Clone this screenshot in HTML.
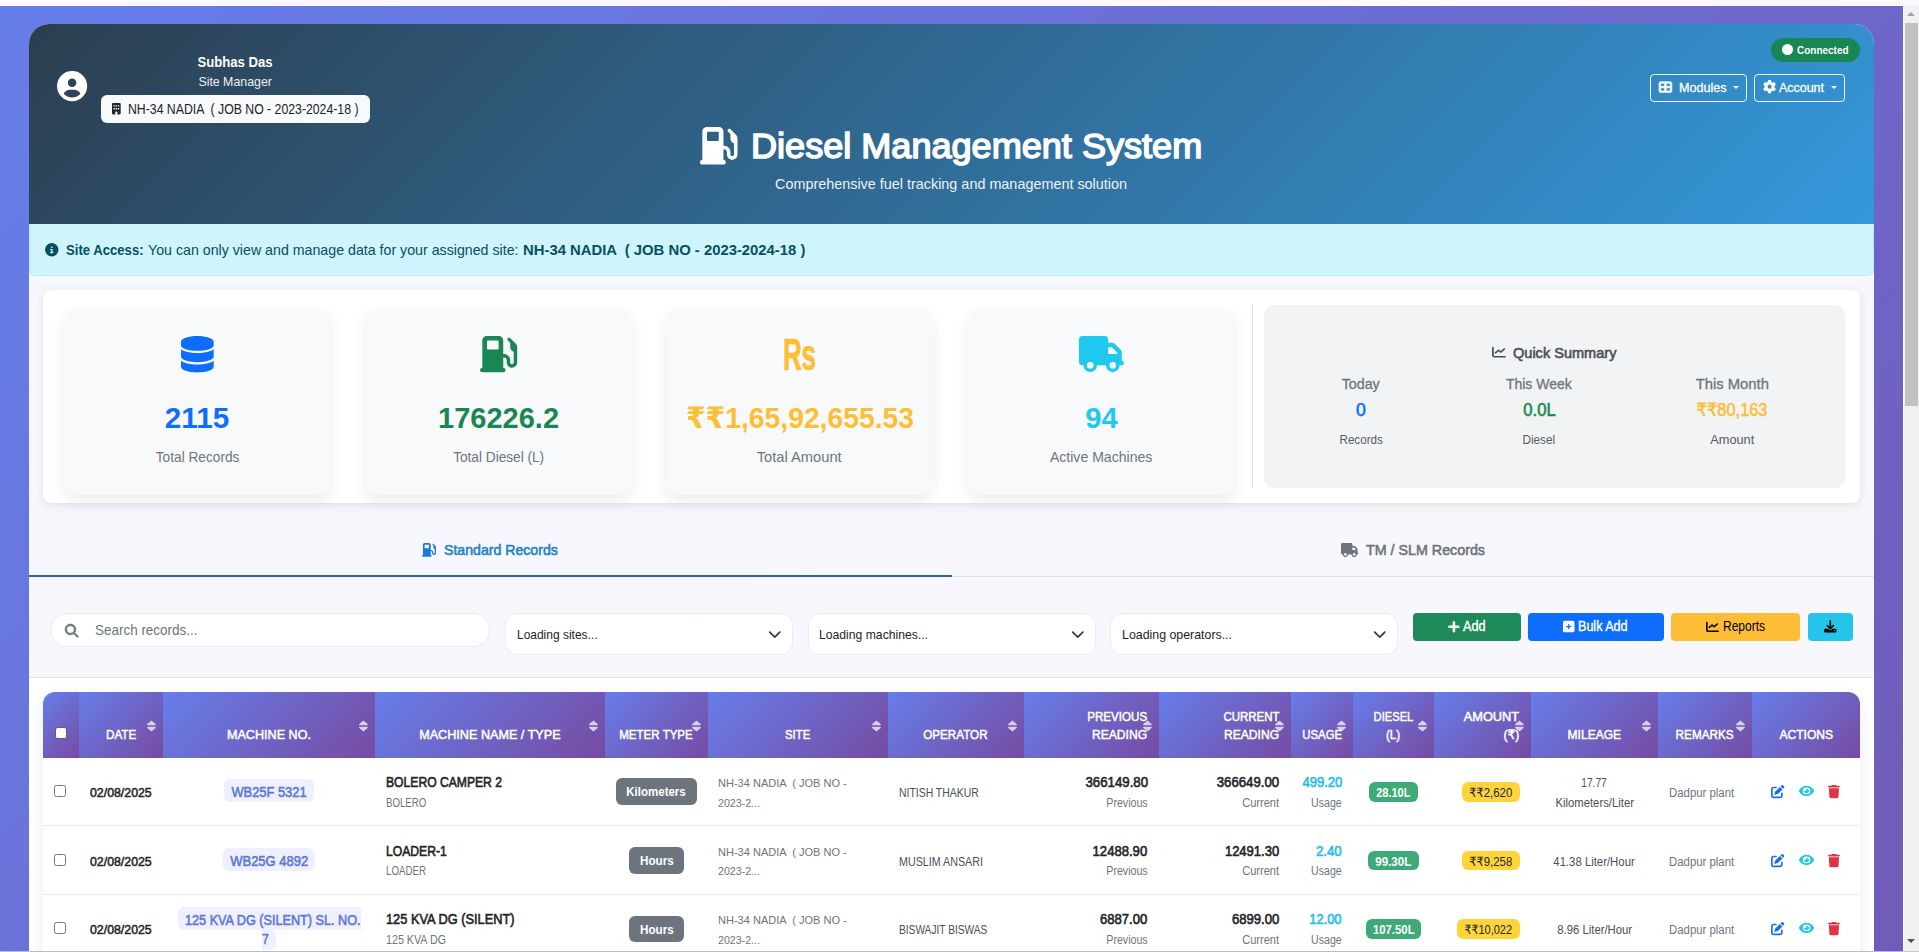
<!DOCTYPE html>
<html lang="en">
<head>
<meta charset="utf-8">
<title>Diesel Management System</title>
<style>
*{box-sizing:border-box;margin:0;padding:0}
html,body{width:1919px;height:952px;overflow:hidden}
body{position:relative;font-family:"Liberation Sans","DejaVu Sans",sans-serif;color:#212529;background:#fdf7ff}
.abs{position:absolute}
.t{position:absolute;white-space:pre;line-height:1;font-weight:400}
svg{display:block;overflow:visible}
.page-bg{position:absolute;left:0;top:6px;width:1903px;height:946px;background:linear-gradient(135deg,#667eea 0%,#764ba2 100%);background-size:1903px 2252px}
.sb{position:absolute;left:1903px;top:6px;width:16px;height:946px;background:#f1f1f1;border-left:1px solid #fafafa}
.sb .thumb{position:absolute;left:1px;top:17px;width:13px;height:383px;background:#c1c1c1}
.sb .up{position:absolute;left:3px;top:6px;width:0;height:0;border-left:4px solid transparent;border-right:4px solid transparent;border-bottom:4px solid #a3a3a3}
.sb .down{position:absolute;left:3px;top:933px;width:0;height:0;border-left:4px solid transparent;border-right:4px solid transparent;border-top:4px solid #505050}
.main{position:absolute;left:29px;top:24px;width:1845px;height:940px;background:rgba(255,255,255,.95);border-radius:20px 20px 0 0;overflow:hidden}
.header{position:absolute;left:0;top:0;width:1845px;height:200px;background:linear-gradient(135deg,#2c3e50 0%,#3498db 100%);color:#fff}
.alert{position:absolute;left:0;top:200px;width:1845px;height:52px;background:#cff4fc;border:1px solid #b6effb;border-top:none;border-radius:0 0 6px 6px;color:#055160}
.stats{position:absolute;left:14px;top:266px;width:1817px;height:213px;background:#fff;border-radius:8px;box-shadow:0 2px 10px rgba(0,0,0,.1)}
.card{position:absolute;top:20.4px;width:265px;height:185px;background:#f8f9fa;border-radius:10px;box-shadow:0 5px 15px rgba(0,0,0,.08)}
.qs{position:absolute;left:1221px;top:15px;width:581px;height:183px;background:#f1f3f5;border-radius:10px}
.vline{position:absolute;left:1209px;top:15px;width:1px;height:183px;background:#dee2e6}
.tabs{position:absolute;left:0;top:500px;width:1845px;height:53px;border-bottom:1px solid #dee2e6}
.tab{position:absolute;top:0;height:53px;width:923px}
.tab.active{border-bottom:2px solid #276c98}
.filters{position:absolute;left:0;top:553px;width:1845px;height:101px;border-bottom:1px solid #e2e5e9}
.search{position:absolute;left:21px;top:36px;width:440px;height:34px;background:#fff;border:1px solid #e9ecef;border-radius:17px}
.sel{position:absolute;top:36px;width:288px;height:42px;background:#fff;border:1px solid #e9ecef;border-radius:12px}
.btn{position:absolute;top:36px;height:28px;border-radius:4px}
.tablewrap{position:absolute;left:0;top:654px;width:1845px;height:300px;background:#fff}
table{position:absolute;left:14px;top:14px;width:1817px;border-collapse:separate;border-spacing:0;table-layout:fixed;background:#fff;border-radius:12px 12px 0 0;overflow:hidden;box-shadow:0 5px 15px rgba(0,0,0,.08)}
th{position:relative;height:65.5px;background:linear-gradient(135deg,#667eea 0%,#764ba2 100%);color:#fff;padding:0}
td{position:relative;height:68.6px;border-bottom:1px solid #e9ecef;padding:0;background:#fff}
.cb{position:absolute;width:12.4px;height:12px;border:1px solid #767676;border-radius:2.5px;background:#fff}
.hcb{position:absolute;width:10.6px;height:10.4px;border-radius:1.5px;background:#fff;box-shadow:0 0 0 .6px rgba(60,60,110,.55)}
.mb{position:absolute;background:#eef1fd;border-radius:6px}
.gb{position:absolute;background:#6c757d;border-radius:6px}
.db{position:absolute;background:#3daa77;border-radius:6px}
.ab{position:absolute;background:#ffd43b;border-radius:6px}
.bottomline{position:absolute;left:0;top:950.6px;width:1919px;height:1.4px;background:linear-gradient(90deg,#b3bcf7 0,#b3bcf7 29px,#bcbcbc 29px,#bcbcbc 1874px,#b9b0e8 1874px,#b9b0e8 1903px,#c8c8c8 1903px)}
</style>
</head>
<body>
<div class="page-bg"></div>
<div class="sb"><div class="up"></div><div class="thumb"></div><div class="down"></div></div>
<div class="main">
<div class="header">
<svg class="abs" style="left:28.00px;top:47.00px;" width="30.20" height="30.20" viewBox="0 0 512 512" fill="#fff" preserveAspectRatio="none"><path fill-rule="evenodd" d="M399 384.2C376.900 345.800 335.400 320 288 320H224c-47.400 0-88.900 25.800-111 64.200c35.200 39.200 86.200 63.800 143 63.800s107.800-24.700 143-63.800zM0 256a256 256 0 1 1 512 0A256 256 0 1 1 0 256zm256 16a72 72 0 1 0 0-144 72 72 0 1 0 0 144z"/></svg>
<span class="t" style="left:166.43px;top:31.00px;font-size:14.00px;font-weight:700;color:#fff;transform:scaleX(0.9359);transform-origin:50% 0;">Subhas Das</span>
<span class="t" style="left:166.05px;top:51.00px;font-size:13.50px;color:#fff;transform:scaleX(0.9154);transform-origin:50% 0;opacity:.92;">Site Manager</span>
<div class="abs" style="left:72.00px;top:71.00px;width:269.20px;height:28.00px;background:#f8f9fa;border-radius:6px;"></div>
<svg class="abs" style="left:82.60px;top:78.80px;" width="8.70" height="11.40" viewBox="0 0 384 512" fill="#212529" preserveAspectRatio="none"><path fill-rule="evenodd" d="M48 0C21.500 0 0 21.500 0 48V464c0 26.500 21.500 48 48 48h96V432c0-26.500 21.500-48 48-48s48 21.500 48 48v80h96c26.500 0 48-21.500 48-48V48c0-26.500-21.500-48-48-48H48zM64 240c0-8.800 7.200-16 16-16h32c8.800 0 16 7.200 16 16v32c0 8.800-7.200 16-16 16H80c-8.800 0-16-7.200-16-16V240zm112-16h32c8.800 0 16 7.200 16 16v32c0 8.800-7.200 16-16 16H176c-8.800 0-16-7.200-16-16V240c0-8.800 7.200-16 16-16zm80 16c0-8.800 7.200-16 16-16h32c8.800 0 16 7.200 16 16v32c0 8.800-7.200 16-16 16H272c-8.800 0-16-7.200-16-16V240zM80 96h32c8.800 0 16 7.200 16 16v32c0 8.800-7.200 16-16 16H80c-8.800 0-16-7.200-16-16V112c0-8.800 7.200-16 16-16zm80 16c0-8.800 7.200-16 16-16h32c8.800 0 16 7.200 16 16v32c0 8.800-7.200 16-16 16H176c-8.800 0-16-7.200-16-16V112zM272 96h32c8.800 0 16 7.200 16 16v32c0 8.800-7.200 16-16 16H272c-8.800 0-16-7.200-16-16V112c0-8.800 7.200-16 16-16z"/></svg>
<span class="t" style="left:99.20px;top:78.00px;font-size:14.60px;color:#212529;transform:scaleX(0.8408);transform-origin:0 0;">NH-34 NADIA  ( JOB NO - 2023-2024-18 )</span>
<svg class="abs" style="left:671.00px;top:102.70px;" width="37.50" height="37.50" viewBox="0 0 512 512" fill="#fff" preserveAspectRatio="none"><path fill-rule="evenodd" d="M32 64C32 28.700 60.700 0 96 0H256c35.300 0 64 28.700 64 64V256h8c48.600 0 88 39.400 88 88v32c0 13.300 10.700 24 24 24s24-10.700 24-24V222c-27.600-7.100-48-32.200-48-62V96L384 64c-8.800-8.800-8.800-23.200 0-32s23.200-8.800 32 0l77.300 77.300c12 12 18.700 28.300 18.700 45.300V168v24 32V376c0 39.800-32.200 72-72 72s-72-32.200-72-72V344c0-22.100-17.900-40-40-40h-8V448c17.700 0 32 14.300 32 32s-14.300 32-32 32H32c-17.700 0-32-14.300-32-32s14.300-32 32-32V64zM96 80v96c0 8.800 7.200 16 16 16H240c8.800 0 16-7.200 16-16V80c0-8.800-7.200-16-16-16H112c-8.800 0-16 7.200-16 16z"/></svg>
<h1 class="t" style="left:722.40px;top:105.00px;font-size:34.50px;-webkit-text-stroke:1.5px #fff;color:#fff;transform:scaleX(1.0458);transform-origin:0 0;">Diesel Management System</h1>
<span class="t" style="left:746.40px;top:152.00px;font-size:15.00px;color:#fff;transform:scaleX(0.9594);transform-origin:0 0;opacity:.92;">Comprehensive fuel tracking and management solution</span>
<div class="abs" style="left:1741.60px;top:13.80px;width:89.20px;height:23.80px;background:#198754;border-radius:12px;"></div>
<div class="abs" style="left:1752.60px;top:20.20px;width:11.30px;height:11.30px;background:#fff;border-radius:50%;"></div>
<span class="t" style="left:1767.90px;top:21.00px;font-size:11.20px;font-weight:700;color:#fff;transform:scaleX(0.8925);transform-origin:0 0;">Connected</span>
<div class="abs" style="left:1621.30px;top:50.00px;width:96.80px;height:27.90px;border:1px solid #f0f8ff;border-radius:4px;"></div>
<svg class="abs" style="left:1629.70px;top:57.10px;" width="12.90" height="12.20" viewBox="0 0 512 512" fill="#fff" preserveAspectRatio="none"><path fill-rule="evenodd" stroke="#fff" stroke-width="26" stroke-linejoin="round" d="M448 96V224H288V96H448zm0 192V416H288V288H448zM224 224H64V96H224V224zM64 288H224V416H64V288zM64 32C28.700 32 0 60.700 0 96V416c0 35.300 28.700 64 64 64H448c35.300 0 64-28.700 64-64V96c0-35.300-28.700-64-64-64H64z"/></svg>
<span class="t" style="left:1649.80px;top:57.00px;font-size:13.50px;color:#fff;transform:scaleX(0.9308);transform-origin:0 0;-webkit-text-stroke:.3px #fff;">Modules</span>
<div class="abs" style="left:1703.80px;top:62.00px;width:6.40px;height:3.20px;width:0;height:0;border-left:3.2px solid transparent;border-right:3.2px solid transparent;border-top:3.2px solid #fff;"></div>
<div class="abs" style="left:1725.00px;top:50.00px;width:91.00px;height:27.90px;border:1px solid #f0f8ff;border-radius:4px;"></div>
<svg class="abs" style="left:1733.50px;top:56.40px;" width="13.10" height="13.35" viewBox="0 0 512 512" fill="#fff" preserveAspectRatio="none"><path fill-rule="evenodd" d="M495.900 166.600c3.200 8.700 .5 18.400-6.400 24.600l-43.300 39.400c1.100 8.300 1.700 16.800 1.700 25.400s-.6 17.100-1.700 25.400l43.300 39.400c6.900 6.200 9.600 15.900 6.400 24.600c-4.400 11.900-9.700 23.300-15.800 34.300l-4.700 8.100c-6.600 11-14 21.400-22.100 31.200c-5.900 7.200-15.700 9.600-24.500 6.800l-55.700-17.700c-13.400 10.300-28.200 18.900-44 25.400l-12.500 57.100c-2 9.100-9 16.300-18.200 17.800c-13.800 2.300-28 3.500-42.500 3.500s-28.700-1.200-42.500-3.500c-9.200-1.500-16.200-8.700-18.200-17.800l-12.500-57.100c-15.800-6.500-30.600-15.100-44-25.400L83.100 425.900c-8.800 2.800-18.600 .3-24.500-6.800c-8.100-9.800-15.500-20.200-22.100-31.200l-4.700-8.100c-6.100-11-11.400-22.400-15.800-34.300c-3.200-8.700-.5-18.400 6.400-24.600l43.300-39.400C64.600 273.100 64 264.600 64 256s.6-17.100 1.700-25.400L22.400 191.200c-6.900-6.200-9.600-15.900-6.400-24.600c4.400-11.900 9.700-23.300 15.800-34.300l4.700-8.100c6.600-11 14-21.400 22.100-31.200c5.900-7.200 15.700-9.600 24.500-6.800l55.700 17.700c13.400-10.300 28.200-18.900 44-25.400l12.500-57.100c2-9.100 9-16.300 18.200-17.800C227.300 1.200 241.500 0 256 0s28.700 1.200 42.500 3.500c9.200 1.500 16.200 8.700 18.200 17.800l12.500 57.100c15.800 6.500 30.600 15.100 44 25.400l55.700-17.700c8.800-2.800 18.600-.3 24.500 6.800c8.100 9.800 15.500 20.200 22.100 31.200l4.700 8.100c6.100 11 11.400 22.400 15.800 34.300zM256 336a80 80 0 1 0 0-160 80 80 0 1 0 0 160z"/></svg>
<span class="t" style="left:1750.40px;top:57.00px;font-size:13.50px;color:#fff;transform:scaleX(0.9225);transform-origin:0 0;-webkit-text-stroke:.3px #fff;">Account</span>
<div class="abs" style="left:1801.60px;top:62.00px;width:6.40px;height:3.20px;width:0;height:0;border-left:3.2px solid transparent;border-right:3.2px solid transparent;border-top:3.2px solid #fff;"></div>
</div>
<div class="alert">
<svg class="abs" style="left:14.50px;top:19.40px;" width="13.50" height="13.50" viewBox="0 0 512 512" fill="#055160" preserveAspectRatio="none"><path fill-rule="evenodd" d="M256 512A256 256 0 1 0 256 0a256 256 0 1 0 0 512zM216 336h24V272H216c-13.300 0-24-10.700-24-24s10.700-24 24-24h48c13.300 0 24 10.700 24 24v88h8c13.300 0 24 10.700 24 24s-10.700 24-24 24H216c-13.300 0-24-10.700-24-24s10.700-24 24-24zm40-208a32 32 0 1 1 0 64 32 32 0 1 1 0-64z"/></svg>
<span class="t" style="left:36.00px;top:19.00px;font-size:14.60px;font-weight:700;color:#055160;transform:scaleX(0.8995);transform-origin:0 0;">Site Access:</span>
<span class="t" style="left:117.80px;top:19.00px;font-size:14.60px;color:#055160;transform:scaleX(0.9730);transform-origin:0 0;">You can only view and manage data for your assigned site:</span>
<span class="t" style="left:492.60px;top:19.00px;font-size:14.60px;font-weight:700;color:#055160;transform:scaleX(1.0171);transform-origin:0 0;">NH-34 NADIA  ( JOB NO - 2023-2024-18 )</span>
</div>
<div class="stats">
<div class="card" style="left:22.3px">
<svg class="abs" style="left:116.00px;top:25.60px;" width="32.70" height="36.50" viewBox="0 0 448 512" fill="#0d6efd" preserveAspectRatio="none"><path fill-rule="evenodd" d="M448 80v48c0 44.200-100.300 80-224 80S0 172.200 0 128V80C0 35.800 100.300 0 224 0S448 35.800 448 80zM393.200 214.700c20.800-7.400 39.900-16.900 54.800-28.600V288c0 44.200-100.300 80-224 80S0 332.200 0 288V186.100c14.900 11.800 34 21.200 54.800 28.600C99.700 230.700 159.500 240 224 240s124.300-9.300 169.200-25.300zM0 346.100c14.900 11.800 34 21.200 54.800 28.600C99.700 390.700 159.500 400 224 400s124.300-9.300 169.200-25.300c20.800-7.400 39.900-16.900 54.800-28.600V432c0 44.200-100.300 80-224 80S0 476.200 0 432V346.100z"/></svg>
<span class="t" style="left:100.00px;top:92.60px;font-size:29.50px;font-weight:700;color:#0d6efd;transform:scaleX(1.0047);transform-origin:50% 0;">2115</span>
<span class="t" style="left:87.38px;top:139.60px;font-size:14.60px;color:#6c757d;transform:scaleX(0.9380);transform-origin:50% 0;">Total Records</span>
</div>
<div class="card" style="left:323.3px">
<svg class="abs" style="left:114.10px;top:26.00px;" width="37.20" height="36.20" viewBox="0 0 512 512" fill="#198754" preserveAspectRatio="none"><path fill-rule="evenodd" d="M32 64C32 28.700 60.700 0 96 0H256c35.300 0 64 28.700 64 64V256h8c48.600 0 88 39.400 88 88v32c0 13.300 10.700 24 24 24s24-10.700 24-24V222c-27.600-7.100-48-32.200-48-62V96L384 64c-8.800-8.800-8.800-23.200 0-32s23.200-8.800 32 0l77.300 77.300c12 12 18.700 28.300 18.700 45.300V168v24 32V376c0 39.800-32.200 72-72 72s-72-32.200-72-72V344c0-22.100-17.900-40-40-40h-8V448c17.700 0 32 14.300 32 32s-14.300 32-32 32H32c-17.700 0-32-14.300-32-32s14.300-32 32-32V64zM96 80v96c0 8.800 7.200 16 16 16H240c8.800 0 16-7.200 16-16V80c0-8.800-7.200-16-16-16H112c-8.800 0-16 7.200-16 16z"/></svg>
<span class="t" style="left:70.78px;top:92.60px;font-size:29.50px;font-weight:700;color:#198754;transform:scaleX(0.9834);transform-origin:50% 0;">176226.2</span>
<span class="t" style="left:83.64px;top:139.60px;font-size:14.60px;color:#6c757d;transform:scaleX(0.9350);transform-origin:50% 0;">Total Diesel (L)</span>
</div>
<div class="card" style="left:624.3px">
<span class="t" style="left:115.80px;top:23.48px;font-size:43.5px;font-weight:700;color:#fdbe36;-webkit-text-stroke:.7px #fdbe36;transform:scaleX(.6);transform-origin:0 0;letter-spacing:-.5px">Rs</span>
<span class="t" style="left:13.25px;top:92.60px;font-size:29.50px;font-weight:700;color:#fdbe36;transform:scaleX(0.9584);transform-origin:50% 0;">₹₹1,65,92,655.53</span>
<span class="t" style="left:90.01px;top:139.60px;font-size:14.60px;color:#6c757d;transform:scaleX(1.0074);transform-origin:50% 0;">Total Amount</span>
</div>
<div class="card" style="left:925.8px">
<svg class="abs" style="left:110.20px;top:26.10px;" width="45.00" height="36.00" viewBox="0 0 640 512" fill="#1fc8ee" preserveAspectRatio="none"><path fill-rule="evenodd" d="M48 0C21.500 0 0 21.500 0 48V368c0 26.500 21.500 48 48 48H64c0 53 43 96 96 96s96-43 96-96H384c0 53 43 96 96 96s96-43 96-96h32c17.700 0 32-14.300 32-32s-14.300-32-32-32V288 256 237.300c0-17-6.700-33.300-18.700-45.300L512 114.700c-12-12-28.300-18.700-45.300-18.700H416V48c0-26.500-21.500-48-48-48H48zM416 160h50.700L544 237.300V256H416V160zM112 416a48 48 0 1 1 96 0 48 48 0 1 1 -96 0zm368-48a48 48 0 1 1 0 96 48 48 0 1 1 0-96z"/></svg>
<span class="t" style="left:115.99px;top:92.60px;font-size:29.50px;font-weight:700;color:#1fc8ee;transform:scaleX(0.9900);transform-origin:50% 0;">94</span>
<span class="t" style="left:79.27px;top:139.60px;font-size:14.60px;color:#6c757d;transform:scaleX(0.9646);transform-origin:50% 0;">Active Machines</span>
</div>
<div class="vline"></div>
<div class="qs">
<svg class="abs" style="left:227.70px;top:41.00px;" width="14.00" height="12.20" viewBox="0 0 512 512" fill="#495057" preserveAspectRatio="none"><path fill-rule="evenodd" d="M64 64c0-17.700-14.300-32-32-32S0 46.300 0 64V400c0 44.200 35.800 80 80 80H480c17.700 0 32-14.300 32-32s-14.300-32-32-32H80c-8.800 0-16-7.200-16-16V64zm406.600 86.600c12.500-12.500 12.500-32.800 0-45.300s-32.800-12.500-45.300 0L320 210.700l-57.400-57.400c-12.500-12.500-32.800-12.500-45.300 0l-112 112c-12.500 12.500-12.500 32.800 0 45.300s32.800 12.500 45.300 0L240 221.300l57.400 57.400c12.500 12.500 32.800 12.500 45.300 0l128-128z"/></svg>
<span class="t" style="left:249.30px;top:40.00px;font-size:15.50px;-webkit-text-stroke:.6px #495057;color:#495057;transform:scaleX(0.9379);transform-origin:0 0;">Quick Summary</span>
<span class="t" style="left:77.45px;top:72.00px;font-size:14.80px;color:#6c757d;transform:scaleX(0.9620);transform-origin:50% 0;-webkit-text-stroke:.3px #6c757d;">Today</span>
<span class="t" style="left:92.19px;top:96.00px;font-size:18.00px;-webkit-text-stroke:.6px #0d6efd;color:#0d6efd;transform:scaleX(0.9785);transform-origin:50% 0;">0</span>
<span class="t" style="left:72.06px;top:128.00px;font-size:13.50px;color:#555c63;transform:scaleX(0.8612);transform-origin:50% 0;">Records</span>
<span class="t" style="left:240.39px;top:72.00px;font-size:14.80px;color:#6c757d;transform:scaleX(0.9436);transform-origin:50% 0;-webkit-text-stroke:.3px #6c757d;">This Week</span>
<span class="t" style="left:257.68px;top:96.00px;font-size:18.00px;-webkit-text-stroke:.6px #198754;color:#198754;transform:scaleX(0.9216);transform-origin:50% 0;">0.0L</span>
<span class="t" style="left:256.44px;top:128.00px;font-size:13.50px;color:#555c63;transform:scaleX(0.8716);transform-origin:50% 0;">Diesel</span>
<span class="t" style="left:431.70px;top:72.00px;font-size:14.80px;color:#6c757d;-webkit-text-stroke:.3px #6c757d;">This Month</span>
<span class="t" style="left:429.32px;top:96.00px;font-size:18.00px;-webkit-text-stroke:.6px #fdbe36;color:#fdbe36;transform:scaleX(0.9106);transform-origin:50% 0;">₹₹80,163</span>
<span class="t" style="left:445.03px;top:128.00px;font-size:13.50px;color:#555c63;transform:scaleX(0.9456);transform-origin:50% 0;">Amount</span>
</div>
</div>
<div class="tabs">
<div class="tab active" style="left:0">
<svg class="abs" style="left:393.00px;top:19.20px;" width="14.00" height="13.80" viewBox="0 0 512 512" fill="#1a7fd4" preserveAspectRatio="none"><path fill-rule="evenodd" d="M32 64C32 28.700 60.700 0 96 0H256c35.300 0 64 28.700 64 64V256h8c48.600 0 88 39.400 88 88v32c0 13.300 10.700 24 24 24s24-10.700 24-24V222c-27.600-7.100-48-32.200-48-62V96L384 64c-8.800-8.800-8.800-23.200 0-32s23.200-8.800 32 0l77.300 77.300c12 12 18.700 28.300 18.700 45.300V168v24 32V376c0 39.800-32.200 72-72 72s-72-32.200-72-72V344c0-22.100-17.900-40-40-40h-8V448c17.700 0 32 14.300 32 32s-14.300 32-32 32H32c-17.700 0-32-14.300-32-32s14.300-32 32-32V64zM96 80v96c0 8.800 7.200 16 16 16H240c8.800 0 16-7.200 16-16V80c0-8.800-7.200-16-16-16H112c-8.800 0-16 7.200-16 16z"/></svg>
<span class="t" style="left:414.90px;top:18.00px;font-size:15.50px;-webkit-text-stroke:.6px #2481c4;color:#2481c4;transform:scaleX(0.9109);transform-origin:0 0;">Standard Records</span>
</div>
<div class="tab" style="left:923px">
<svg class="abs" style="left:388.50px;top:18.80px;" width="17.50" height="14.00" viewBox="0 0 640 512" fill="#6c757d" preserveAspectRatio="none"><path fill-rule="evenodd" d="M48 0C21.500 0 0 21.500 0 48V368c0 26.500 21.500 48 48 48H64c0 53 43 96 96 96s96-43 96-96H384c0 53 43 96 96 96s96-43 96-96h32c17.700 0 32-14.300 32-32s-14.300-32-32-32V288 256 237.300c0-17-6.700-33.300-18.700-45.300L512 114.700c-12-12-28.300-18.700-45.300-18.700H416V48c0-26.500-21.500-48-48-48H48zM416 160h50.700L544 237.300V256H416V160zM112 416a48 48 0 1 1 96 0 48 48 0 1 1 -96 0zm368-48a48 48 0 1 1 0 96 48 48 0 1 1 0-96z"/></svg>
<span class="t" style="left:414.00px;top:18.00px;font-size:15.50px;-webkit-text-stroke:.6px #6c757d;color:#6c757d;transform:scaleX(0.9210);transform-origin:0 0;">TM / SLM Records</span>
</div>
</div>
<div class="filters">
<div class="search">
<svg class="abs" style="left:13.80px;top:9.80px;" width="13.40" height="13.40" viewBox="0 0 512 512" fill="#6c757d" preserveAspectRatio="none"><path fill-rule="evenodd" stroke="#6c757d" stroke-width="22" stroke-linejoin="round" d="M416 208c0 45.900-14.900 88.300-40 122.700L502.600 457.400c12.500 12.500 12.500 32.800 0 45.300s-32.800 12.500-45.300 0L330.700 376c-34.400 25.200-76.800 40-122.700 40C93.100 416 0 322.900 0 208S93.100 0 208 0S416 93.100 416 208zM208 352a144 144 0 1 0 0-288 144 144 0 1 0 0 288z"/></svg>
<span class="t" style="left:43.80px;top:9.00px;font-size:14.40px;color:#6c757d;transform:scaleX(0.9354);transform-origin:0 0;">Search records...</span>
</div>
<div class="sel" style="left:476.0px">
<span class="t" style="left:10.80px;top:14.00px;font-size:13.40px;color:#212529;transform:scaleX(0.8937);transform-origin:0 0;">Loading sites...</span>
<svg class="abs" style="left:262.00px;top:16.00px;" width="13.50" height="9.30" viewBox="0 0 16 11" preserveAspectRatio="none"><path d="M2 2.5l6 6 6-6" fill="none" stroke="#343a40" stroke-width="2" stroke-linecap="round" stroke-linejoin="round"/></svg>
</div>
<div class="sel" style="left:778.5px">
<span class="t" style="left:10.80px;top:14.00px;font-size:13.40px;color:#212529;transform:scaleX(0.9094);transform-origin:0 0;">Loading machines...</span>
<svg class="abs" style="left:262.00px;top:16.00px;" width="13.50" height="9.30" viewBox="0 0 16 11" preserveAspectRatio="none"><path d="M2 2.5l6 6 6-6" fill="none" stroke="#343a40" stroke-width="2" stroke-linecap="round" stroke-linejoin="round"/></svg>
</div>
<div class="sel" style="left:1081.0px">
<span class="t" style="left:10.80px;top:14.00px;font-size:13.40px;color:#212529;transform:scaleX(0.9234);transform-origin:0 0;">Loading operators...</span>
<svg class="abs" style="left:262.00px;top:16.00px;" width="13.50" height="9.30" viewBox="0 0 16 11" preserveAspectRatio="none"><path d="M2 2.5l6 6 6-6" fill="none" stroke="#343a40" stroke-width="2" stroke-linecap="round" stroke-linejoin="round"/></svg>
</div>
<div class="btn" style="left:1384.0px;width:108.0px;background:#1f8a59"><svg class="abs" style="left:35.00px;top:6.50px;" width="11.80" height="13.50" viewBox="0 0 448 512" fill="#fff" preserveAspectRatio="none"><path fill-rule="evenodd" stroke="#fff" stroke-width="32" stroke-linejoin="round" d="M256 80c0-17.700-14.300-32-32-32s-32 14.300-32 32V224H48c-17.700 0-32 14.300-32 32s14.300 32 32 32H192V432c0 17.700 14.300 32 32 32s32-14.300 32-32V288H400c17.700 0 32-14.300 32-32s-14.300-32-32-32H256V80z"/></svg><span class="t" style="left:50.00px;top:6.00px;font-size:14.20px;color:#fff;transform:scaleX(0.8950);transform-origin:0 0;-webkit-text-stroke:.35px #fff;">Add</span></div>
<div class="btn" style="left:1499.0px;width:136.0px;background:#0d6efd"><svg class="abs" style="left:35.20px;top:7.00px;" width="11.50" height="13.20" viewBox="0 0 448 512" fill="#fff" preserveAspectRatio="none"><path fill-rule="evenodd" d="M64 32C28.700 32 0 60.700 0 96V416c0 35.300 28.700 64 64 64H384c35.300 0 64-28.700 64-64V96c0-35.300-28.700-64-64-64H64zM200 344V280H136c-13.300 0-24-10.700-24-24s10.700-24 24-24h64V168c0-13.300 10.700-24 24-24s24 10.700 24 24v64h64c13.300 0 24 10.700 24 24s-10.700 24-24 24H248v64c0 13.300-10.700 24-24 24s-24-10.700-24-24z"/></svg><span class="t" style="left:50.40px;top:6.00px;font-size:14.20px;color:#fff;transform:scaleX(0.8855);transform-origin:0 0;-webkit-text-stroke:.35px #fff;">Bulk Add</span></div>
<div class="btn" style="left:1642.0px;width:128.8px;background:#fdbe36"><svg class="abs" style="left:34.50px;top:7.50px;" width="13.00" height="11.70" viewBox="0 0 512 512" fill="#000" preserveAspectRatio="none"><path fill-rule="evenodd" d="M64 64c0-17.700-14.300-32-32-32S0 46.300 0 64V400c0 44.200 35.800 80 80 80H480c17.700 0 32-14.300 32-32s-14.300-32-32-32H80c-8.800 0-16-7.200-16-16V64zm406.600 86.600c12.500-12.500 12.500-32.800 0-45.300s-32.800-12.500-45.300 0L320 210.700l-57.400-57.400c-12.500-12.500-32.800-12.500-45.300 0l-112 112c-12.500 12.500-12.500 32.800 0 45.300s32.800 12.500 45.300 0L240 221.300l57.400 57.400c12.500 12.500 32.800 12.500 45.300 0l128-128z"/></svg><span class="t" style="left:51.60px;top:6.00px;font-size:14.20px;color:#000;transform:scaleX(0.8473);transform-origin:0 0;">Reports</span></div>
<div class="btn" style="left:1778.8px;width:45.2px;background:#25c4ea"><svg class="abs" style="left:16.20px;top:7.40px;" width="12.60" height="12.60" viewBox="0 0 512 512" fill="#000" preserveAspectRatio="none"><path fill-rule="evenodd" d="M288 32c0-17.700-14.300-32-32-32s-32 14.300-32 32V274.700l-73.400-73.400c-12.500-12.500-32.800-12.500-45.300 0s-12.500 32.800 0 45.300l128 128c12.500 12.500 32.800 12.500 45.300 0l128-128c12.500-12.500 12.500-32.800 0-45.300s-32.800-12.500-45.300 0L288 274.700V32zM64 352c-35.300 0-64 28.700-64 64v32c0 35.300 28.700 64 64 64H448c35.300 0 64-28.700 64-64V416c0-35.300-28.700-64-64-64H346.500l-45.300 45.300c-25 25-65.500 25-90.500 0L165.500 352H64zm368 56a24 24 0 1 1 0 48 24 24 0 1 1 0-48z"/></svg></div>
</div>
<div class="tablewrap">
<table><colgroup><col style="width:35.5px"><col style="width:84.5px"><col style="width:211.5px"><col style="width:230.5px"><col style="width:102.5px"><col style="width:180.2px"><col style="width:136.3px"><col style="width:134.8px"><col style="width:132.0px"><col style="width:62.1px"><col style="width:80.8px"><col style="width:97.2px"><col style="width:126.8px"><col style="width:94.3px"><col style="width:108.0px"></colgroup>
<thead><tr>
<th><span class="hcb" style="left:12.9px;top:35.9px"></span></th>
<th><span class="t" style="left:25.15px;top:36.00px;font-size:13.20px;-webkit-text-stroke:.5px #fff;color:#fff;transform:scaleX(0.8859);transform-origin:50% 0;">DATE</span><svg class="abs" style="left:68.70px;top:27.70px;" width="8.90" height="11.90" viewBox="0 0 320 512" fill="rgba(255,255,255,.72)" preserveAspectRatio="none"><path fill-rule="evenodd" d="M137.400 41.400c12.500-12.500 32.800-12.500 45.300 0l128 128c9.200 9.200 11.900 22.900 6.900 34.900s-16.600 19.800-29.600 19.800H32c-12.900 0-24.600-7.800-29.600-19.800s-2.200-25.700 6.900-34.900l128-128zm0 429.300l-128-128c-9.200-9.200-11.900-22.900-6.900-34.900s16.600-19.800 29.600-19.800H288c12.900 0 24.600 7.800 29.600 19.800s2.200 25.700-6.900 34.900l-128 128c-12.500 12.500-32.800 12.500-45.300 0z"/></svg></th>
<th><span class="t" style="left:61.79px;top:36.00px;font-size:13.20px;-webkit-text-stroke:.5px #fff;color:#fff;transform:scaleX(0.9554);transform-origin:50% 0;">MACHINE NO.</span><svg class="abs" style="left:195.70px;top:27.70px;" width="8.90" height="11.90" viewBox="0 0 320 512" fill="rgba(255,255,255,.72)" preserveAspectRatio="none"><path fill-rule="evenodd" d="M137.400 41.400c12.500-12.500 32.800-12.500 45.300 0l128 128c9.200 9.200 11.900 22.900 6.900 34.900s-16.600 19.800-29.600 19.800H32c-12.900 0-24.600-7.800-29.600-19.800s-2.200-25.700 6.900-34.900l128-128zm0 429.300l-128-128c-9.200-9.200-11.900-22.900-6.900-34.900s16.600-19.800 29.600-19.800H288c12.900 0 24.600 7.800 29.600 19.800s2.200 25.700-6.900 34.900l-128 128c-12.500 12.500-32.800 12.500-45.300 0z"/></svg></th>
<th><span class="t" style="left:41.36px;top:36.00px;font-size:13.20px;-webkit-text-stroke:.5px #fff;color:#fff;transform:scaleX(0.9575);transform-origin:50% 0;">MACHINE NAME / TYPE</span><svg class="abs" style="left:214.70px;top:27.70px;" width="8.90" height="11.90" viewBox="0 0 320 512" fill="rgba(255,255,255,.72)" preserveAspectRatio="none"><path fill-rule="evenodd" d="M137.400 41.400c12.500-12.500 32.800-12.500 45.300 0l128 128c9.200 9.200 11.900 22.900 6.900 34.900s-16.600 19.800-29.600 19.800H32c-12.900 0-24.600-7.800-29.600-19.800s-2.200-25.700 6.900-34.900l128-128zm0 429.300l-128-128c-9.200-9.200-11.900-22.900-6.900-34.900s16.600-19.800 29.600-19.800H288c12.900 0 24.600 7.800 29.600 19.800s2.200 25.700-6.900 34.900l-128 128c-12.500 12.500-32.800 12.500-45.300 0z"/></svg></th>
<th><span class="t" style="left:9.23px;top:36.00px;font-size:13.20px;-webkit-text-stroke:.5px #fff;color:#fff;transform:scaleX(0.8747);transform-origin:50% 0;">METER TYPE</span><svg class="abs" style="left:87.00px;top:27.70px;" width="8.90" height="11.90" viewBox="0 0 320 512" fill="rgba(255,255,255,.72)" preserveAspectRatio="none"><path fill-rule="evenodd" d="M137.400 41.400c12.500-12.500 32.800-12.500 45.300 0l128 128c9.200 9.200 11.900 22.900 6.900 34.900s-16.600 19.800-29.600 19.800H32c-12.900 0-24.600-7.800-29.600-19.800s-2.200-25.700 6.900-34.900l128-128zm0 429.300l-128-128c-9.200-9.200-11.900-22.900-6.900-34.900s16.600-19.800 29.600-19.800H288c12.900 0 24.600 7.800 29.600 19.800s2.200 25.700-6.900 34.900l-128 128c-12.500 12.500-32.800 12.500-45.300 0z"/></svg></th>
<th><span class="t" style="left:75.44px;top:36.00px;font-size:13.20px;-webkit-text-stroke:.5px #fff;color:#fff;transform:scaleX(0.8597);transform-origin:50% 0;">SITE</span><svg class="abs" style="left:164.40px;top:27.70px;" width="8.90" height="11.90" viewBox="0 0 320 512" fill="rgba(255,255,255,.72)" preserveAspectRatio="none"><path fill-rule="evenodd" d="M137.400 41.400c12.500-12.500 32.800-12.500 45.300 0l128 128c9.200 9.200 11.900 22.900 6.900 34.900s-16.600 19.800-29.600 19.800H32c-12.900 0-24.600-7.800-29.600-19.800s-2.200-25.700 6.900-34.900l128-128zm0 429.300l-128-128c-9.200-9.200-11.900-22.900-6.900-34.900s16.600-19.800 29.600-19.800H288c12.900 0 24.600 7.800 29.600 19.800s2.200 25.700-6.900 34.900l-128 128c-12.500 12.500-32.800 12.500-45.300 0z"/></svg></th>
<th><span class="t" style="left:31.75px;top:36.00px;font-size:13.20px;-webkit-text-stroke:.5px #fff;color:#fff;transform:scaleX(0.8833);transform-origin:50% 0;">OPERATOR</span><svg class="abs" style="left:120.50px;top:27.70px;" width="8.90" height="11.90" viewBox="0 0 320 512" fill="rgba(255,255,255,.72)" preserveAspectRatio="none"><path fill-rule="evenodd" d="M137.400 41.400c12.500-12.500 32.800-12.500 45.300 0l128 128c9.200 9.200 11.900 22.900 6.900 34.900s-16.600 19.800-29.600 19.800H32c-12.900 0-24.600-7.800-29.600-19.800s-2.200-25.700 6.900-34.900l128-128zm0 429.300l-128-128c-9.200-9.200-11.900-22.900-6.900-34.900s16.600-19.800 29.600-19.800H288c12.900 0 24.600 7.800 29.600 19.800s2.200 25.700-6.900 34.900l-128 128c-12.500 12.500-32.800 12.500-45.300 0z"/></svg></th>
<th><span class="t" style="left:55.34px;top:18.00px;font-size:13.20px;-webkit-text-stroke:.5px #fff;color:#fff;transform:scaleX(0.8803);transform-origin:100% 0;">PREVIOUS</span><span class="t" style="left:63.41px;top:36.00px;font-size:13.20px;-webkit-text-stroke:.5px #fff;color:#fff;transform:scaleX(0.9186);transform-origin:100% 0;">READING</span><svg class="abs" style="left:119.00px;top:27.70px;" width="8.90" height="11.90" viewBox="0 0 320 512" fill="rgba(255,255,255,.72)" preserveAspectRatio="none"><path fill-rule="evenodd" d="M137.400 41.400c12.500-12.500 32.800-12.500 45.300 0l128 128c9.200 9.200 11.900 22.900 6.900 34.900s-16.600 19.800-29.600 19.800H32c-12.900 0-24.600-7.800-29.600-19.800s-2.200-25.700 6.900-34.900l128-128zm0 429.300l-128-128c-9.200-9.200-11.900-22.900-6.900-34.900s16.600-19.800 29.600-19.800H288c12.900 0 24.600 7.800 29.600 19.800s2.200 25.700-6.900 34.900l-128 128c-12.500 12.500-32.800 12.500-45.300 0z"/></svg></th>
<th><span class="t" style="left:55.92px;top:18.00px;font-size:13.20px;-webkit-text-stroke:.5px #fff;color:#fff;transform:scaleX(0.8684);transform-origin:100% 0;">CURRENT</span><span class="t" style="left:60.31px;top:36.00px;font-size:13.20px;-webkit-text-stroke:.5px #fff;color:#fff;transform:scaleX(0.9186);transform-origin:100% 0;">READING</span><svg class="abs" style="left:116.20px;top:27.70px;" width="8.90" height="11.90" viewBox="0 0 320 512" fill="rgba(255,255,255,.72)" preserveAspectRatio="none"><path fill-rule="evenodd" d="M137.400 41.400c12.500-12.500 32.800-12.500 45.300 0l128 128c9.200 9.200 11.900 22.900 6.900 34.900s-16.600 19.800-29.600 19.800H32c-12.900 0-24.600-7.800-29.600-19.800s-2.200-25.700 6.900-34.900l128-128zm0 429.300l-128-128c-9.200-9.200-11.900-22.900-6.900-34.900s16.600-19.800 29.600-19.800H288c12.900 0 24.600 7.800 29.600 19.800s2.200 25.700-6.900 34.900l-128 128c-12.500 12.500-32.800 12.500-45.300 0z"/></svg></th>
<th><span class="t" style="left:5.03px;top:36.00px;font-size:13.20px;-webkit-text-stroke:.5px #fff;color:#fff;transform:scaleX(0.8663);transform-origin:100% 0;">USAGE</span><svg class="abs" style="left:46.30px;top:27.70px;" width="8.90" height="11.90" viewBox="0 0 320 512" fill="rgba(255,255,255,.72)" preserveAspectRatio="none"><path fill-rule="evenodd" d="M137.400 41.400c12.500-12.500 32.800-12.500 45.300 0l128 128c9.200 9.200 11.900 22.900 6.900 34.900s-16.600 19.800-29.600 19.800H32c-12.900 0-24.600-7.800-29.600-19.800s-2.200-25.700 6.900-34.900l128-128zm0 429.300l-128-128c-9.200-9.200-11.900-22.900-6.900-34.900s16.600-19.800 29.600-19.800H288c12.900 0 24.600 7.800 29.600 19.800s2.200 25.700-6.900 34.900l-128 128c-12.500 12.500-32.800 12.500-45.300 0z"/></svg></th>
<th><span class="t" style="left:16.94px;top:18.00px;font-size:13.20px;-webkit-text-stroke:.5px #fff;color:#fff;transform:scaleX(0.8461);transform-origin:50% 0;">DIESEL</span><span class="t" style="left:32.34px;top:36.00px;font-size:13.20px;-webkit-text-stroke:.5px #fff;color:#fff;transform:scaleX(0.8868);transform-origin:50% 0;">(L)</span><svg class="abs" style="left:65.00px;top:27.70px;" width="8.90" height="11.90" viewBox="0 0 320 512" fill="rgba(255,255,255,.72)" preserveAspectRatio="none"><path fill-rule="evenodd" d="M137.400 41.400c12.500-12.500 32.800-12.500 45.300 0l128 128c9.200 9.200 11.900 22.900 6.900 34.900s-16.600 19.800-29.600 19.800H32c-12.900 0-24.600-7.800-29.600-19.800s-2.200-25.700 6.900-34.900l128-128zm0 429.300l-128-128c-9.200-9.200-11.900-22.900-6.900-34.900s16.600-19.800 29.600-19.800H288c12.900 0 24.600 7.800 29.600 19.800s2.200 25.700-6.900 34.900l-128 128c-12.500 12.500-32.800 12.500-45.300 0z"/></svg></th>
<th><span class="t" style="left:28.54px;top:18.00px;font-size:13.20px;-webkit-text-stroke:.5px #fff;color:#fff;transform:scaleX(0.9693);transform-origin:100% 0;">AMOUNT</span><span class="t" style="left:68.51px;top:36.00px;font-size:13.20px;-webkit-text-stroke:.5px #fff;color:#fff;transform:scaleX(0.9135);transform-origin:100% 0;">(₹)</span><svg class="abs" style="left:81.40px;top:27.70px;" width="8.90" height="11.90" viewBox="0 0 320 512" fill="rgba(255,255,255,.72)" preserveAspectRatio="none"><path fill-rule="evenodd" d="M137.400 41.400c12.500-12.500 32.800-12.500 45.300 0l128 128c9.200 9.200 11.900 22.900 6.900 34.900s-16.600 19.800-29.600 19.800H32c-12.900 0-24.600-7.800-29.600-19.800s-2.200-25.700 6.900-34.900l128-128zm0 429.300l-128-128c-9.200-9.200-11.900-22.900-6.900-34.900s16.600-19.800 29.600-19.800H288c12.900 0 24.600 7.800 29.600 19.800s2.200 25.700-6.900 34.900l-128 128c-12.500 12.500-32.800 12.500-45.300 0z"/></svg></th>
<th><span class="t" style="left:34.08px;top:36.00px;font-size:13.20px;-webkit-text-stroke:.5px #fff;color:#fff;transform:scaleX(0.9123);transform-origin:50% 0;">MILEAGE</span><svg class="abs" style="left:111.00px;top:27.70px;" width="8.90" height="11.90" viewBox="0 0 320 512" fill="rgba(255,255,255,.72)" preserveAspectRatio="none"><path fill-rule="evenodd" d="M137.400 41.400c12.500-12.500 32.800-12.500 45.300 0l128 128c9.200 9.200 11.900 22.900 6.900 34.900s-16.600 19.800-29.600 19.800H32c-12.900 0-24.600-7.800-29.600-19.800s-2.200-25.700 6.900-34.900l128-128zm0 429.300l-128-128c-9.200-9.200-11.900-22.900-6.900-34.900s16.600-19.800 29.600-19.800H288c12.900 0 24.600 7.800 29.600 19.800s2.200 25.700-6.900 34.900l-128 128c-12.500 12.500-32.800 12.500-45.300 0z"/></svg></th>
<th><span class="t" style="left:14.54px;top:36.00px;font-size:13.20px;-webkit-text-stroke:.5px #fff;color:#fff;transform:scaleX(0.8893);transform-origin:50% 0;">REMARKS</span><svg class="abs" style="left:78.50px;top:27.70px;" width="8.90" height="11.90" viewBox="0 0 320 512" fill="rgba(255,255,255,.72)" preserveAspectRatio="none"><path fill-rule="evenodd" d="M137.400 41.400c12.500-12.500 32.800-12.500 45.300 0l128 128c9.200 9.200 11.900 22.900 6.900 34.900s-16.600 19.800-29.600 19.800H32c-12.900 0-24.600-7.800-29.600-19.800s-2.200-25.700 6.900-34.900l128-128zm0 429.300l-128-128c-9.200-9.200-11.900-22.900-6.900-34.900s16.600-19.800 29.600-19.800H288c12.900 0 24.600 7.800 29.600 19.800s2.200 25.700-6.900 34.900l-128 128c-12.500 12.500-32.800 12.500-45.300 0z"/></svg></th>
<th><span class="t" style="left:24.69px;top:36.00px;font-size:13.20px;-webkit-text-stroke:.5px #fff;color:#fff;transform:scaleX(0.9160);transform-origin:50% 0;">ACTIONS</span></th>
</tr></thead><tbody>
<tr>
<td><span class="cb" style="left:10.7px;top:27.2px"></span></td>
<td><span class="t" style="left:11.50px;top:29.40px;font-size:12.20px;-webkit-text-stroke:.5px #212529;color:#212529;transform:scaleX(1.0115);transform-origin:0 0;">02/08/2025</span></td>
<td><div class="abs mb" style="left:61.10px;top:21.80px;width:89.60px;height:22.90px;"></div><span class="t" style="left:63.90px;top:27.40px;font-size:14.40px;-webkit-text-stroke:.6px #5f78d8;color:#5f78d8;transform:scaleX(0.8952);transform-origin:50% 0;">WB25F 5321</span></td>
<td><span class="t" style="left:11.80px;top:17.40px;font-size:14.20px;-webkit-text-stroke:.6px #212529;color:#212529;transform:scaleX(0.8554);transform-origin:0 0;">BOLERO CAMPER 2</span><span class="t" style="left:11.80px;top:39.40px;font-size:12.00px;color:#6c757d;transform:scaleX(0.8057);transform-origin:0 0;">BOLERO</span></td>
<td><div class="abs gb" style="left:11.00px;top:20.40px;width:80.90px;height:26.90px;"></div><span class="t" style="left:19.43px;top:28.40px;font-size:12.40px;font-weight:700;color:#fff;transform:scaleX(0.9274);transform-origin:50% 0;">Kilometers</span></td>
<td><span class="t" style="left:10.80px;top:20.40px;font-size:11.80px;color:#6c757d;transform:scaleX(0.9357);transform-origin:0 0;">NH-34 NADIA  ( JOB NO -</span><span class="t" style="left:10.80px;top:40.40px;font-size:11.80px;color:#6c757d;transform:scaleX(0.9017);transform-origin:0 0;">2023-2...</span></td>
<td><span class="t" style="left:11.70px;top:29.40px;font-size:12.00px;color:#495057;transform:scaleX(0.8682);transform-origin:0 0;">NITISH THAKUR</span></td>
<td><span class="t" style="left:56.62px;top:17.40px;font-size:14.20px;-webkit-text-stroke:.6px #212529;color:#212529;transform:scaleX(0.9332);transform-origin:100% 0;">366149.80</span><span class="t" style="left:77.01px;top:39.40px;font-size:12.00px;color:#6c757d;transform:scaleX(0.8867);transform-origin:100% 0;">Previous</span></td>
<td><span class="t" style="left:53.52px;top:17.40px;font-size:14.20px;-webkit-text-stroke:.6px #212529;color:#212529;transform:scaleX(0.9288);transform-origin:100% 0;">366649.00</span><span class="t" style="left:80.58px;top:39.40px;font-size:12.00px;color:#6c757d;transform:scaleX(0.9196);transform-origin:100% 0;">Current</span></td>
<td><span class="t" style="left:7.79px;top:17.40px;font-size:14.20px;-webkit-text-stroke:.6px #1fc0e8;color:#1fc0e8;transform:scaleX(0.9215);transform-origin:100% 0;">499.20</span><span class="t" style="left:16.51px;top:39.40px;font-size:12.00px;color:#6c757d;transform:scaleX(0.8822);transform-origin:100% 0;">Usage</span></td>
<td><div class="abs db" style="left:16.00px;top:24.40px;width:48.80px;height:20.00px;"></div><span class="t" style="left:21.11px;top:29.40px;font-size:12.40px;font-weight:700;color:#fff;transform:scaleX(0.8891);transform-origin:50% 0;">28.10L</span></td>
<td><div class="abs ab" style="left:28.30px;top:24.40px;width:58.00px;height:20.00px;"></div><span class="t" style="left:33.53px;top:29.40px;font-size:12.60px;color:#212529;transform:scaleX(0.9023);transform-origin:50% 0;">₹₹2,620</span></td>
<td><span class="t" style="left:48.38px;top:19.40px;font-size:12.00px;color:#495057;transform:scaleX(0.8458);transform-origin:50% 0;">17.77</span><span class="t" style="left:21.71px;top:39.40px;font-size:12.00px;color:#495057;transform:scaleX(0.9427);transform-origin:50% 0;">Kilometers/Liter</span></td>
<td><span class="t" style="left:11.40px;top:29.40px;font-size:12.00px;color:#6c757d;transform:scaleX(0.9488);transform-origin:0 0;">Dadpur plant</span></td>
<td><svg class="abs" style="left:18.90px;top:27.30px;" width="13.40" height="13.20" viewBox="0 0 512 512" fill="#176fee" preserveAspectRatio="none"><path fill-rule="evenodd" d="M471.600 21.700c-21.900-21.900-57.300-21.900-79.200 0L362.300 51.700l97.900 97.900 30.100-30.100c21.900-21.900 21.900-57.300 0-79.200L471.600 21.700zm-299.200 220c-6.100 6.100-10.800 13.600-13.500 21.900l-29.600 88.800c-2.900 8.600-.6 18.100 5.800 24.600s15.900 8.700 24.600 5.800l88.800-29.600c8.200-2.700 15.700-7.400 21.900-13.500L437.700 172.300 339.700 74.300 172.400 241.700zM96 64C43 64 0 107 0 160V416c0 53 43 96 96 96H352c53 0 96-43 96-96V320c0-17.700-14.300-32-32-32s-32 14.300-32 32v96c0 17.700-14.300 32-32 32H96c-17.700 0-32-14.300-32-32V160c0-17.700 14.300-32 32-32h96c17.700 0 32-14.300 32-32s-14.300-32-32-32H96z"/></svg><svg class="abs" style="left:46.60px;top:27.40px;" width="15.10" height="11.80" viewBox="0 0 576 512" fill="#22c5eb" preserveAspectRatio="none"><path fill-rule="evenodd" d="M288 32c-80.800 0-145.500 36.800-192.600 80.600C48.600 156 17.300 208 2.500 243.700c-3.300 7.900-3.300 16.700 0 24.600C17.300 304 48.600 356 95.400 399.400C142.500 443.200 207.200 480 288 480s145.500-36.800 192.600-80.600c46.800-43.500 78.100-95.400 93-131.100c3.300-7.900 3.300-16.700 0-24.600c-14.900-35.700-46.200-87.700-93-131.100C433.500 68.800 368.800 32 288 32zM144 256a144 144 0 1 1 288 0 144 144 0 1 1 -288 0zm144-64c0 35.300-28.700 64-64 64c-7.100 0-13.900-1.200-20.300-3.300c-5.500-1.800-11.900 1.600-11.700 7.400c.3 6.900 1.300 13.800 3.200 20.700c13.700 51.200 66.400 81.600 117.600 67.900s81.600-66.400 67.900-117.600c-11.100-41.500-47.800-69.400-88.600-71.100c-5.800-.2-9.200 6.100-7.400 11.700c2.100 6.400 3.300 13.200 3.300 20.300z"/></svg><svg class="abs" style="left:75.70px;top:27.30px;" width="11.90" height="13.20" viewBox="0 0 448 512" fill="#dc3545" preserveAspectRatio="none"><path fill-rule="evenodd" d="M135.200 17.700L128 32H32C14.300 32 0 46.300 0 64S14.300 96 32 96H416c17.700 0 32-14.300 32-32s-14.300-32-32-32H320l-7.200-14.300C307.400 6.800 296.300 0 284.200 0H163.800c-12.100 0-23.200 6.800-28.600 17.700zM416 128H32L53.200 467c1.600 25.300 22.600 45 47.900 45H346.900c25.300 0 46.300-19.700 47.900-45L416 128z"/></svg></td>
</tr>
<tr>
<td><span class="cb" style="left:10.7px;top:27.8px"></span></td>
<td><span class="t" style="left:11.50px;top:29.80px;font-size:12.20px;-webkit-text-stroke:.5px #212529;color:#212529;transform:scaleX(1.0115);transform-origin:0 0;">02/08/2025</span></td>
<td><div class="abs mb" style="left:59.70px;top:22.40px;width:92.40px;height:22.80px;"></div><span class="t" style="left:62.70px;top:27.80px;font-size:14.40px;-webkit-text-stroke:.6px #5f78d8;color:#5f78d8;transform:scaleX(0.9027);transform-origin:50% 0;">WB25G 4892</span></td>
<td><span class="t" style="left:11.80px;top:17.80px;font-size:14.20px;-webkit-text-stroke:.6px #212529;color:#212529;transform:scaleX(0.8567);transform-origin:0 0;">LOADER-1</span><span class="t" style="left:11.80px;top:38.80px;font-size:12.00px;color:#6c757d;transform:scaleX(0.8104);transform-origin:0 0;">LOADER</span></td>
<td><div class="abs gb" style="left:23.90px;top:20.90px;width:55.10px;height:26.60px;"></div><span class="t" style="left:33.54px;top:28.80px;font-size:12.40px;font-weight:700;color:#fff;transform:scaleX(0.9410);transform-origin:50% 0;">Hours</span></td>
<td><span class="t" style="left:10.80px;top:20.80px;font-size:11.80px;color:#6c757d;transform:scaleX(0.9357);transform-origin:0 0;">NH-34 NADIA  ( JOB NO -</span><span class="t" style="left:10.80px;top:39.80px;font-size:11.80px;color:#6c757d;transform:scaleX(0.9017);transform-origin:0 0;">2023-2...</span></td>
<td><span class="t" style="left:11.70px;top:29.80px;font-size:12.00px;color:#495057;transform:scaleX(0.8933);transform-origin:0 0;">MUSLIM ANSARI</span></td>
<td><span class="t" style="left:64.51px;top:17.80px;font-size:14.20px;-webkit-text-stroke:.6px #212529;color:#212529;transform:scaleX(0.9225);transform-origin:100% 0;">12488.90</span><span class="t" style="left:77.01px;top:38.80px;font-size:12.00px;color:#6c757d;transform:scaleX(0.8867);transform-origin:100% 0;">Previous</span></td>
<td><span class="t" style="left:61.41px;top:17.80px;font-size:14.20px;-webkit-text-stroke:.6px #212529;color:#212529;transform:scaleX(0.9174);transform-origin:100% 0;">12491.30</span><span class="t" style="left:80.58px;top:38.80px;font-size:12.00px;color:#6c757d;transform:scaleX(0.9196);transform-origin:100% 0;">Current</span></td>
<td><span class="t" style="left:23.58px;top:17.80px;font-size:14.20px;-webkit-text-stroke:.6px #1fc0e8;color:#1fc0e8;transform:scaleX(0.9303);transform-origin:100% 0;">2.40</span><span class="t" style="left:16.51px;top:38.80px;font-size:12.00px;color:#6c757d;transform:scaleX(0.8822);transform-origin:100% 0;">Usage</span></td>
<td><div class="abs db" style="left:15.10px;top:24.70px;width:50.90px;height:19.30px;"></div><span class="t" style="left:21.26px;top:29.80px;font-size:12.40px;font-weight:700;color:#fff;transform:scaleX(0.9332);transform-origin:50% 0;">99.30L</span></td>
<td><div class="abs ab" style="left:28.30px;top:24.70px;width:58.00px;height:19.30px;"></div><span class="t" style="left:33.53px;top:29.80px;font-size:12.60px;color:#212529;transform:scaleX(0.9023);transform-origin:50% 0;">₹₹9,258</span></td>
<td><span class="t" style="left:20.37px;top:29.80px;font-size:12.00px;color:#495057;transform:scaleX(0.9458);transform-origin:50% 0;">41.38 Liter/Hour</span></td>
<td><span class="t" style="left:11.40px;top:29.80px;font-size:12.00px;color:#6c757d;transform:scaleX(0.9488);transform-origin:0 0;">Dadpur plant</span></td>
<td><svg class="abs" style="left:18.90px;top:27.50px;" width="13.40" height="13.20" viewBox="0 0 512 512" fill="#176fee" preserveAspectRatio="none"><path fill-rule="evenodd" d="M471.600 21.700c-21.900-21.900-57.300-21.900-79.200 0L362.300 51.700l97.900 97.900 30.100-30.100c21.900-21.900 21.900-57.300 0-79.200L471.600 21.700zm-299.200 220c-6.100 6.100-10.800 13.600-13.500 21.900l-29.600 88.800c-2.900 8.600-.6 18.100 5.800 24.600s15.900 8.700 24.600 5.800l88.800-29.600c8.200-2.700 15.700-7.400 21.900-13.500L437.700 172.300 339.700 74.300 172.400 241.700zM96 64C43 64 0 107 0 160V416c0 53 43 96 96 96H352c53 0 96-43 96-96V320c0-17.700-14.300-32-32-32s-32 14.300-32 32v96c0 17.700-14.300 32-32 32H96c-17.700 0-32-14.300-32-32V160c0-17.700 14.300-32 32-32h96c17.700 0 32-14.300 32-32s-14.300-32-32-32H96z"/></svg><svg class="abs" style="left:46.60px;top:27.60px;" width="15.10" height="11.80" viewBox="0 0 576 512" fill="#22c5eb" preserveAspectRatio="none"><path fill-rule="evenodd" d="M288 32c-80.800 0-145.500 36.800-192.600 80.600C48.600 156 17.300 208 2.500 243.700c-3.300 7.900-3.300 16.700 0 24.600C17.300 304 48.600 356 95.400 399.400C142.500 443.200 207.200 480 288 480s145.500-36.800 192.600-80.600c46.800-43.500 78.100-95.400 93-131.100c3.300-7.900 3.300-16.700 0-24.600c-14.900-35.700-46.200-87.700-93-131.100C433.500 68.800 368.800 32 288 32zM144 256a144 144 0 1 1 288 0 144 144 0 1 1 -288 0zm144-64c0 35.300-28.700 64-64 64c-7.100 0-13.900-1.200-20.300-3.300c-5.500-1.800-11.900 1.600-11.700 7.400c.3 6.900 1.300 13.800 3.200 20.700c13.700 51.200 66.400 81.600 117.600 67.900s81.600-66.400 67.900-117.600c-11.100-41.500-47.800-69.400-88.600-71.100c-5.800-.2-9.200 6.100-7.400 11.700c2.100 6.400 3.300 13.200 3.300 20.300z"/></svg><svg class="abs" style="left:75.70px;top:27.50px;" width="11.90" height="13.20" viewBox="0 0 448 512" fill="#dc3545" preserveAspectRatio="none"><path fill-rule="evenodd" d="M135.200 17.700L128 32H32C14.300 32 0 46.300 0 64S14.300 96 32 96H416c17.700 0 32-14.300 32-32s-14.300-32-32-32H320l-7.200-14.300C307.400 6.800 296.300 0 284.200 0H163.800c-12.100 0-23.200 6.800-28.600 17.700zM416 128H32L53.200 467c1.600 25.300 22.600 45 47.900 45H346.900c25.300 0 46.300-19.700 47.900-45L416 128z"/></svg></td>
</tr>
<tr>
<td><span class="cb" style="left:10.7px;top:27.2px"></span></td>
<td><span class="t" style="left:11.50px;top:29.20px;font-size:12.20px;-webkit-text-stroke:.5px #212529;color:#212529;transform:scaleX(1.0115);transform-origin:0 0;">02/08/2025</span></td>
<td><div class="abs mb" style="left:14.50px;top:12.20px;width:183.50px;height:23.60px;border-radius:6px 0 0 6px;"></div><div class="abs mb" style="left:99.00px;top:35.80px;width:13.60px;height:19.40px;border-radius:0 6px 6px 0;"></div><span class="t" style="left:21.60px;top:18.20px;font-size:14.40px;-webkit-text-stroke:.6px #5f78d8;color:#5f78d8;transform:scaleX(0.8794);transform-origin:0 0;">125 KVA DG (SILENT) SL. NO.</span><span class="t" style="left:98.70px;top:37.20px;font-size:14.40px;-webkit-text-stroke:.6px #5f78d8;color:#5f78d8;transform:scaleX(0.8483);transform-origin:0 0;">7</span></td>
<td><span class="t" style="left:11.80px;top:17.20px;font-size:14.20px;-webkit-text-stroke:.6px #212529;color:#212529;transform:scaleX(0.9028);transform-origin:0 0;">125 KVA DG (SILENT)</span><span class="t" style="left:11.80px;top:39.20px;font-size:12.00px;color:#6c757d;transform:scaleX(0.8934);transform-origin:0 0;">125 KVA DG</span></td>
<td><div class="abs gb" style="left:23.90px;top:21.20px;width:55.10px;height:25.70px;"></div><span class="t" style="left:33.54px;top:29.20px;font-size:12.40px;font-weight:700;color:#fff;transform:scaleX(0.9410);transform-origin:50% 0;">Hours</span></td>
<td><span class="t" style="left:10.80px;top:20.20px;font-size:11.80px;color:#6c757d;transform:scaleX(0.9357);transform-origin:0 0;">NH-34 NADIA  ( JOB NO -</span><span class="t" style="left:10.80px;top:40.20px;font-size:11.80px;color:#6c757d;transform:scaleX(0.9017);transform-origin:0 0;">2023-2...</span></td>
<td><span class="t" style="left:11.70px;top:29.20px;font-size:12.00px;color:#495057;transform:scaleX(0.8470);transform-origin:0 0;">BISWAJIT BISWAS</span></td>
<td><span class="t" style="left:72.40px;top:17.20px;font-size:14.20px;-webkit-text-stroke:.6px #212529;color:#212529;transform:scaleX(0.9240);transform-origin:100% 0;">6887.00</span><span class="t" style="left:77.01px;top:39.20px;font-size:12.00px;color:#6c757d;transform:scaleX(0.8867);transform-origin:100% 0;">Previous</span></td>
<td><span class="t" style="left:69.30px;top:17.20px;font-size:14.20px;-webkit-text-stroke:.6px #212529;color:#212529;transform:scaleX(0.9240);transform-origin:100% 0;">6899.00</span><span class="t" style="left:80.58px;top:39.20px;font-size:12.00px;color:#6c757d;transform:scaleX(0.9196);transform-origin:100% 0;">Current</span></td>
<td><span class="t" style="left:15.68px;top:17.20px;font-size:14.20px;-webkit-text-stroke:.6px #1fc0e8;color:#1fc0e8;transform:scaleX(0.9095);transform-origin:100% 0;">12.00</span><span class="t" style="left:16.51px;top:39.20px;font-size:12.00px;color:#6c757d;transform:scaleX(0.8822);transform-origin:100% 0;">Usage</span></td>
<td><div class="abs db" style="left:12.80px;top:24.30px;width:55.20px;height:19.80px;"></div><span class="t" style="left:17.67px;top:29.20px;font-size:12.40px;font-weight:700;color:#fff;transform:scaleX(0.9171);transform-origin:50% 0;">107.50L</span></td>
<td><div class="abs ab" style="left:23.40px;top:24.30px;width:62.90px;height:19.80px;"></div><span class="t" style="left:27.58px;top:29.20px;font-size:12.60px;color:#212529;transform:scaleX(0.8745);transform-origin:50% 0;">₹₹10,022</span></td>
<td><span class="t" style="left:23.70px;top:29.20px;font-size:12.00px;color:#495057;transform:scaleX(0.9422);transform-origin:50% 0;">8.96 Liter/Hour</span></td>
<td><span class="t" style="left:11.40px;top:29.20px;font-size:12.00px;color:#6c757d;transform:scaleX(0.9488);transform-origin:0 0;">Dadpur plant</span></td>
<td><svg class="abs" style="left:18.90px;top:27.20px;" width="13.40" height="13.20" viewBox="0 0 512 512" fill="#176fee" preserveAspectRatio="none"><path fill-rule="evenodd" d="M471.600 21.700c-21.900-21.900-57.300-21.900-79.200 0L362.300 51.700l97.900 97.900 30.100-30.100c21.900-21.900 21.900-57.300 0-79.200L471.600 21.700zm-299.200 220c-6.100 6.100-10.800 13.600-13.500 21.900l-29.600 88.800c-2.900 8.600-.6 18.100 5.800 24.600s15.900 8.700 24.600 5.800l88.800-29.600c8.200-2.700 15.700-7.400 21.900-13.500L437.700 172.300 339.700 74.300 172.400 241.700zM96 64C43 64 0 107 0 160V416c0 53 43 96 96 96H352c53 0 96-43 96-96V320c0-17.700-14.300-32-32-32s-32 14.300-32 32v96c0 17.700-14.300 32-32 32H96c-17.700 0-32-14.300-32-32V160c0-17.700 14.300-32 32-32h96c17.700 0 32-14.300 32-32s-14.300-32-32-32H96z"/></svg><svg class="abs" style="left:46.60px;top:27.30px;" width="15.10" height="11.80" viewBox="0 0 576 512" fill="#22c5eb" preserveAspectRatio="none"><path fill-rule="evenodd" d="M288 32c-80.800 0-145.500 36.800-192.600 80.600C48.600 156 17.300 208 2.500 243.700c-3.300 7.900-3.300 16.700 0 24.600C17.300 304 48.600 356 95.400 399.400C142.500 443.200 207.200 480 288 480s145.500-36.800 192.600-80.600c46.800-43.500 78.100-95.400 93-131.100c3.300-7.900 3.300-16.700 0-24.600c-14.900-35.700-46.200-87.700-93-131.100C433.500 68.800 368.800 32 288 32zM144 256a144 144 0 1 1 288 0 144 144 0 1 1 -288 0zm144-64c0 35.300-28.700 64-64 64c-7.100 0-13.900-1.200-20.300-3.300c-5.500-1.800-11.900 1.600-11.700 7.400c.3 6.900 1.300 13.800 3.200 20.700c13.700 51.200 66.400 81.600 117.600 67.900s81.600-66.400 67.900-117.600c-11.100-41.500-47.800-69.400-88.600-71.100c-5.800-.2-9.200 6.100-7.400 11.700c2.100 6.400 3.300 13.200 3.300 20.300z"/></svg><svg class="abs" style="left:75.70px;top:27.20px;" width="11.90" height="13.20" viewBox="0 0 448 512" fill="#dc3545" preserveAspectRatio="none"><path fill-rule="evenodd" d="M135.200 17.700L128 32H32C14.300 32 0 46.300 0 64S14.300 96 32 96H416c17.700 0 32-14.300 32-32s-14.300-32-32-32H320l-7.200-14.300C307.400 6.800 296.300 0 284.200 0H163.800c-12.100 0-23.200 6.800-28.600 17.700zM416 128H32L53.200 467c1.600 25.300 22.600 45 47.900 45H346.900c25.300 0 46.300-19.700 47.900-45L416 128z"/></svg></td>
</tr>
</tbody></table>
</div>
</div>
<div class="bottomline"></div>
</body>
</html>
